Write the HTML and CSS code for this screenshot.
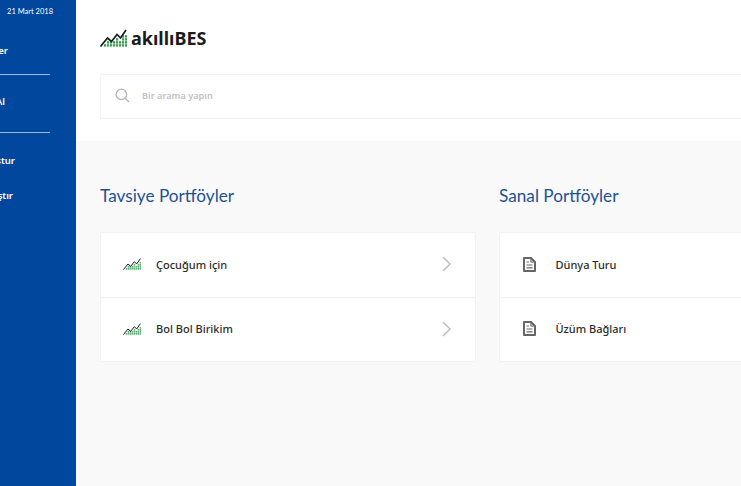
FILE: index.html
```html
<!DOCTYPE html>
<html lang="tr">
<head>
<meta charset="utf-8">
<title>akıllıBES</title>
<link rel="stylesheet" href="styles.css">
</head>
<body>
<div class="app">
  <aside class="sidebar">
    <div class="date">21 Mart 2018</div>
    <nav class="nav">
      <a class="nav-item pad-8">Tavsiye Portföyler</a>
      <hr class="nav-rule">
      <a class="nav-item pad-5">Portföy Satın Al</a>
      <hr class="nav-rule nav-rule-2">
      <a class="nav-item pad-15">Portföy Oluştur</a>
      <a class="nav-item pad-13">Karşılaştır</a>
    </nav>
  </aside>
  <main class="main">
    <header class="header">
      <div class="logo">
        <svg class="logo-mark" viewBox="0 0 27 18" width="27" height="18" aria-hidden="true">
          <g class="mark-dots">
            <rect x="4" y="15.2" width="2.2" height="2.4"/><rect x="7" y="15.2" width="2.2" height="2.4"/><rect x="10" y="15.2" width="2.2" height="2.4"/><rect x="13" y="15.2" width="2.2" height="2.4"/><rect x="16" y="15.2" width="2.2" height="2.4"/><rect x="19" y="15.2" width="2.2" height="2.4"/><rect x="22" y="15.2" width="2.2" height="2.4"/><rect x="25" y="15.2" width="2" height="2.4"/>
            <rect x="7" y="12.2" width="2.2" height="2.4"/><rect x="10" y="12.2" width="2.2" height="2.4"/><rect x="13" y="12.2" width="2.2" height="2.4"/><rect x="16" y="12.2" width="2.2" height="2.4"/><rect x="19" y="12.2" width="2.2" height="2.4"/><rect x="22" y="12.2" width="2.2" height="2.4"/><rect x="25" y="12.2" width="2" height="2.4"/>
            <rect x="16" y="9.2" width="2.2" height="2.4"/><rect x="22" y="9.2" width="2.2" height="2.4"/><rect x="25" y="9.2" width="2" height="2.4"/>
            <rect x="22" y="6.2" width="2.2" height="2.4"/><rect x="25" y="6.2" width="2" height="2.4"/>
          </g>
          <path class="mark-line" d="M0.5 17.5 L7.5 9 L11.5 12.5 L17 5.5 L20.5 9 L26 1"/>
        </svg>
        <span class="logo-text">akıllıBES</span>
      </div>
      <div class="search">
        <svg class="search-icon" viewBox="0 0 16 16" width="15" height="15" aria-hidden="true">
          <circle cx="6.8" cy="6.8" r="5.6"/>
          <path d="M11 11 L15 15"/>
        </svg>
        <span class="search-text">Bir arama yapın</span>
      </div>
    </header>
    <section class="content">
      <div class="column">
        <h2 class="title">Tavsiye Portföyler</h2>
        <div class="card">
          <div class="row">
            <svg class="row-icon" viewBox="0 0 27 18" width="18" height="12" aria-hidden="true">
              <g class="row-dots">
                <rect x="4" y="15" width="2.4" height="2.6"/><rect x="7" y="15" width="2.4" height="2.6"/><rect x="10" y="15" width="2.4" height="2.6"/><rect x="13" y="15" width="2.4" height="2.6"/><rect x="16" y="15" width="2.4" height="2.6"/><rect x="19" y="15" width="2.4" height="2.6"/><rect x="22" y="15" width="2.4" height="2.6"/><rect x="25" y="15" width="2" height="2.6"/>
                <rect x="7" y="12" width="2.4" height="2.6"/><rect x="10" y="12" width="2.4" height="2.6"/><rect x="13" y="12" width="2.4" height="2.6"/><rect x="16" y="12" width="2.4" height="2.6"/><rect x="19" y="12" width="2.4" height="2.6"/><rect x="22" y="12" width="2.4" height="2.6"/><rect x="25" y="12" width="2" height="2.6"/>
                <rect x="16" y="9" width="2.4" height="2.6"/><rect x="22" y="9" width="2.4" height="2.6"/><rect x="25" y="9" width="2" height="2.6"/>
                <rect x="25" y="6" width="2" height="2.6"/>
              </g>
              <path class="row-line" d="M0.5 17.5 L7.5 9 L11.5 12.5 L17 5.5 L20.5 9 L26 1"/>
            </svg>
            <span class="row-label">Çocuğum için</span>
            <svg class="chevron" viewBox="0 0 9 16" width="9" height="16" aria-hidden="true"><path d="M1 1 L8 8 L1 15"/></svg>
          </div>
          <div class="row">
            <svg class="row-icon" viewBox="0 0 27 18" width="18" height="12" aria-hidden="true">
              <g class="row-dots">
                <rect x="4" y="15" width="2.4" height="2.6"/><rect x="7" y="15" width="2.4" height="2.6"/><rect x="10" y="15" width="2.4" height="2.6"/><rect x="13" y="15" width="2.4" height="2.6"/><rect x="16" y="15" width="2.4" height="2.6"/><rect x="19" y="15" width="2.4" height="2.6"/><rect x="22" y="15" width="2.4" height="2.6"/><rect x="25" y="15" width="2" height="2.6"/>
                <rect x="7" y="12" width="2.4" height="2.6"/><rect x="10" y="12" width="2.4" height="2.6"/><rect x="13" y="12" width="2.4" height="2.6"/><rect x="16" y="12" width="2.4" height="2.6"/><rect x="19" y="12" width="2.4" height="2.6"/><rect x="22" y="12" width="2.4" height="2.6"/><rect x="25" y="12" width="2" height="2.6"/>
                <rect x="16" y="9" width="2.4" height="2.6"/><rect x="22" y="9" width="2.4" height="2.6"/><rect x="25" y="9" width="2" height="2.6"/>
                <rect x="25" y="6" width="2" height="2.6"/>
              </g>
              <path class="row-line" d="M0.5 17.5 L7.5 9 L11.5 12.5 L17 5.5 L20.5 9 L26 1"/>
            </svg>
            <span class="row-label">Bol Bol Birikim</span>
            <svg class="chevron" viewBox="0 0 9 16" width="9" height="16" aria-hidden="true"><path d="M1 1 L8 8 L1 15"/></svg>
          </div>
        </div>
      </div>
      <div class="column">
        <h2 class="title">Sanal Portföyler</h2>
        <div class="card">
          <div class="row">
            <svg class="doc-icon" viewBox="0 0 13 15" width="13" height="15" aria-hidden="true">
              <path class="doc-body" d="M1 1 H8 L12 5 V14 H1 Z"/>
              <path class="doc-lines" d="M3.5 5 H6 M3.5 8 H9.5 M3.5 10.8 H9.5 M8 1 V5 H12"/>
            </svg>
            <span class="row-label">Dünya Turu</span>
          </div>
          <div class="row">
            <svg class="doc-icon" viewBox="0 0 13 15" width="13" height="15" aria-hidden="true">
              <path class="doc-body" d="M1 1 H8 L12 5 V14 H1 Z"/>
              <path class="doc-lines" d="M3.5 5 H6 M3.5 8 H9.5 M3.5 10.8 H9.5 M8 1 V5 H12"/>
            </svg>
            <span class="row-label">Üzüm Bağları</span>
          </div>
        </div>
      </div>
    </section>
  </main>
</div>
</body>
</html>
```
FILE: styles.css
```css
* { box-sizing: border-box; }
html, body { margin: 0; height: 100%; overflow: hidden; }
body { font-family: "Noto Sans", "Open Sans", sans-serif; background: #fff; }
.app { display: flex; width: 741px; height: 486px; overflow: hidden; }

.sidebar { flex: 0 0 76px; width: 76px; background: #00479d; color: #fff; overflow: hidden; }
.date { display: flex; justify-content: flex-end; height: 24px; padding: 6px 23px 0 0; font-family: Lato, "Noto Sans", sans-serif; font-size: 7.5px; line-height: 12px; white-space: nowrap; }
.nav { display: flex; flex-direction: column; padding-top: 19px; }
.nav-item { display: flex; justify-content: flex-end; height: 16px; line-height: 16px; font-size: 9.5px; font-weight: 600; white-space: nowrap; }
.pad-8 { padding-right: 68px; }
.pad-5 { padding-right: 71px; }
.pad-15 { padding-right: 61px; }
.pad-13 { padding-right: 63px; margin-top: 19px; }
.nav-rule { width: 50px; height: 1px; margin: 15px 0 19px; border: 0; background: #9db9e0; }
.nav-rule-2 { margin: 22px 0 20px; }

.main { flex: 1 0 auto; min-width: 0; display: flex; flex-direction: column; }
.header { height: 141px; padding: 28px 0 0 24px; background: #fff; }
.logo { display: flex; align-items: center; gap: 4px; height: 20px; }
.logo-text { font-size: 18px; font-weight: 700; line-height: 20px; color: #1b1b1b; }
.mark-line { fill: none; stroke: #1d1d1d; stroke-width: 1.7; }
.row-line { fill: none; stroke: #1d1d1d; stroke-width: 1.5; }
.mark-dots { fill: #3a9c50; }
.row-dots { fill: #5fb374; }
.search { display: flex; align-items: center; gap: 12px; height: 45px; margin-top: 26px; padding: 0 0 2px 14px; border: 1px solid #f3f3f5; border-right: 0; border-radius: 2px 0 0 2px; }
.search-icon { fill: none; stroke: #b4b4b4; stroke-width: 1.4; }
.search-text { font-size: 9.2px; font-weight: 600; color: #c1c1c1; }

.content { flex: 1; display: flex; gap: 23px; padding: 0 0 0 24px; background: #f9f9fa; }
.column { flex: 0 0 376px; width: 376px; }
.title { margin: 43px 0 24px; font-family: Lato, "Noto Sans", sans-serif; font-size: 17.2px; line-height: 24px; font-weight: 400; color: #1e5193; }
.card { display: flex; flex-direction: column; background: #fff; border: 1px solid #f2f2f4; border-radius: 2px; }
.row { display: flex; align-items: center; height: 64px; padding: 0 24px 2px 22px; }
.row + .row { border-top: 1px solid #f2f2f4; }
.row-icon { flex: none; margin-right: 15px; }
.doc-icon { flex: none; margin: 0 19.5px 0 1px; }
.doc-body { fill: #fff; stroke: #666; stroke-width: 2; stroke-linejoin: round; }
.doc-lines { fill: none; stroke: #666; stroke-width: 1.2; }
.row-label { flex: 1; font-size: 11px; font-weight: 500; color: #2c2c2c; }
.chevron { flex: none; fill: none; stroke: #bdbdbd; stroke-width: 1.5; }
```
